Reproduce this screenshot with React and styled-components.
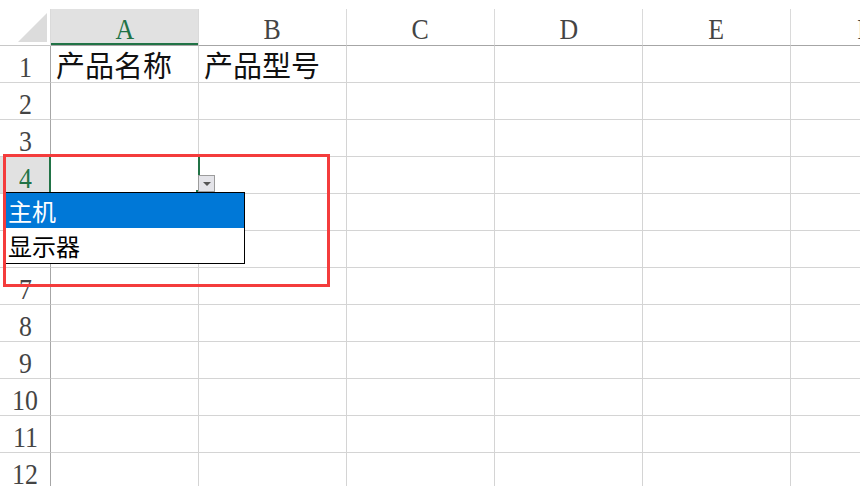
import React from 'react'
import styled, { createGlobalStyle } from 'styled-components'

const GlobalStyle = createGlobalStyle`
  html, body {
    margin: 0;
    padding: 0;
    background: #fff;
  }
  body {
    width: 860px;
    height: 486px;
    overflow: hidden;
    font-family: "Liberation Serif", serif;
  }
`

const GREEN = '#217346'

const Sheet = styled.div`
  position: relative;
  width: 860px;
  height: 486px;
  padding-top: 9px;
  box-sizing: border-box;
  overflow: hidden;
`

const Grid = styled.div`
  display: grid;
  grid-template-columns: 51px repeat(6, 148px);
  grid-auto-rows: 37px;
`

const Corner = styled.div`
  box-sizing: border-box;
  display: flex;
  align-items: flex-end;
  justify-content: flex-end;
  padding: 0 3px 3px 0;
  border-right: 1px solid #dadada;
  border-bottom: 1px solid #c8c8c8;
`

const ColHead = styled.div`
  box-sizing: border-box;
  display: flex;
  align-items: center;
  justify-content: center;
  padding-top: 3px;
  border-right: 1px solid #dadada;
  border-bottom: 1px solid #a6a6a6;
  background: ${p => (p.$active ? '#e1e1e1' : '#fff')};
  box-shadow: ${p => (p.$active ? `inset 0 -2px 0 ${GREEN}` : 'none')};
  color: ${p => (p.$active ? GREEN : '#444')};
  font-size: 30px;
  line-height: 1;
`

const Glyph = styled.span`
  display: inline-block;
  transform: scaleX(0.86);
`

const RowHead = styled.div`
  box-sizing: border-box;
  display: flex;
  align-items: center;
  justify-content: center;
  padding-top: 5px;
  border-right: 1px solid #a6a6a6;
  border-bottom: 1px solid #d4d4d4;
  background: ${p => (p.$active ? '#e1e1e1' : '#fff')};
  color: ${p => (p.$active ? GREEN : '#444')};
  font-size: 30px;
  line-height: 1;
`

const Cell = styled.div`
  box-sizing: border-box;
  display: flex;
  align-items: flex-end;
  padding: 0 0 1px 5px;
  border-right: 1px solid #d4d4d4;
  border-bottom: 1px solid #d4d4d4;
  font-family: "Noto Sans CJK SC", "Liberation Sans", sans-serif;
  font-size: 29px;
  line-height: 1.15;
  color: #111;
  white-space: nowrap;
`

const Selection = styled.div`
  position: absolute;
  left: 49px;
  top: 155px;
  width: 151px;
  height: 38px;
  box-sizing: border-box;
  border: 2px solid ${GREEN};
  border-bottom: none;
`

const FillHandle = styled.div`
  position: absolute;
  left: 196px;
  top: 190px;
  width: 5px;
  height: 5px;
  background: ${GREEN};
`

const DropButton = styled.div`
  position: absolute;
  left: 198px;
  top: 175px;
  width: 17px;
  height: 17px;
  box-sizing: border-box;
  border: 1px solid #9c9c9c;
  background: #e4e4e9;
  display: flex;
  align-items: center;
  justify-content: center;
`

const Arrow = styled.span`
  width: 0;
  height: 0;
  margin-top: 1px;
  border-left: 4px solid transparent;
  border-right: 4px solid transparent;
  border-top: 4px solid #555;
`

const DropList = styled.ul`
  position: absolute;
  left: 3px;
  top: 192px;
  width: 242px;
  margin: 0;
  padding: 0;
  list-style: none;
  box-sizing: border-box;
  border: 1px solid #000;
  background: #fff;
`

const Option = styled.li`
  height: 35px;
  display: flex;
  align-items: center;
  padding-left: 4px;
  font-family: "Noto Sans CJK SC", "Liberation Sans", sans-serif;
  font-size: 24px;
  line-height: 1;
  background: ${p => (p.$selected ? '#0078d7' : '#fff')};
  color: ${p => (p.$selected ? '#fff' : '#000')};
`

const Callout = styled.div`
  position: absolute;
  left: 3px;
  top: 154px;
  width: 327px;
  height: 133px;
  box-sizing: border-box;
  border: 3px solid #f43c3c;
  pointer-events: none;
`

const columns = ['A', 'B', 'C', 'D', 'E', 'F']
const rows = Array.from({ length: 12 }, (_, i) => i + 1)
const data = { 1: ['产品名称', '产品型号'] }
const options = ['主机', '显示器']

export default function App() {
  return (
    <>
      <GlobalStyle />
      <Sheet>
        <Grid>
          <Corner>
            <svg width="29" height="29" viewBox="0 0 29 29">
              <polygon points="29,0 29,29 0,29" fill="#dcdcdc" />
            </svg>
          </Corner>
          {columns.map(c => (
            <ColHead key={c} $active={c === 'A'}>
              <Glyph>{c}</Glyph>
            </ColHead>
          ))}
          {rows.map(r => (
            <React.Fragment key={r}>
              <RowHead $active={r === 4}>
                <Glyph>{r}</Glyph>
              </RowHead>
              {columns.map((c, i) => (
                <Cell key={c}>{data[r] ? data[r][i] : null}</Cell>
              ))}
            </React.Fragment>
          ))}
        </Grid>

        <Selection />
        <FillHandle />
        <DropButton>
          <Arrow />
        </DropButton>
        <DropList>
          {options.map((o, i) => (
            <Option key={o} $selected={i === 0}>{o}</Option>
          ))}
        </DropList>
        <Callout />
      </Sheet>
    </>
  )
}
